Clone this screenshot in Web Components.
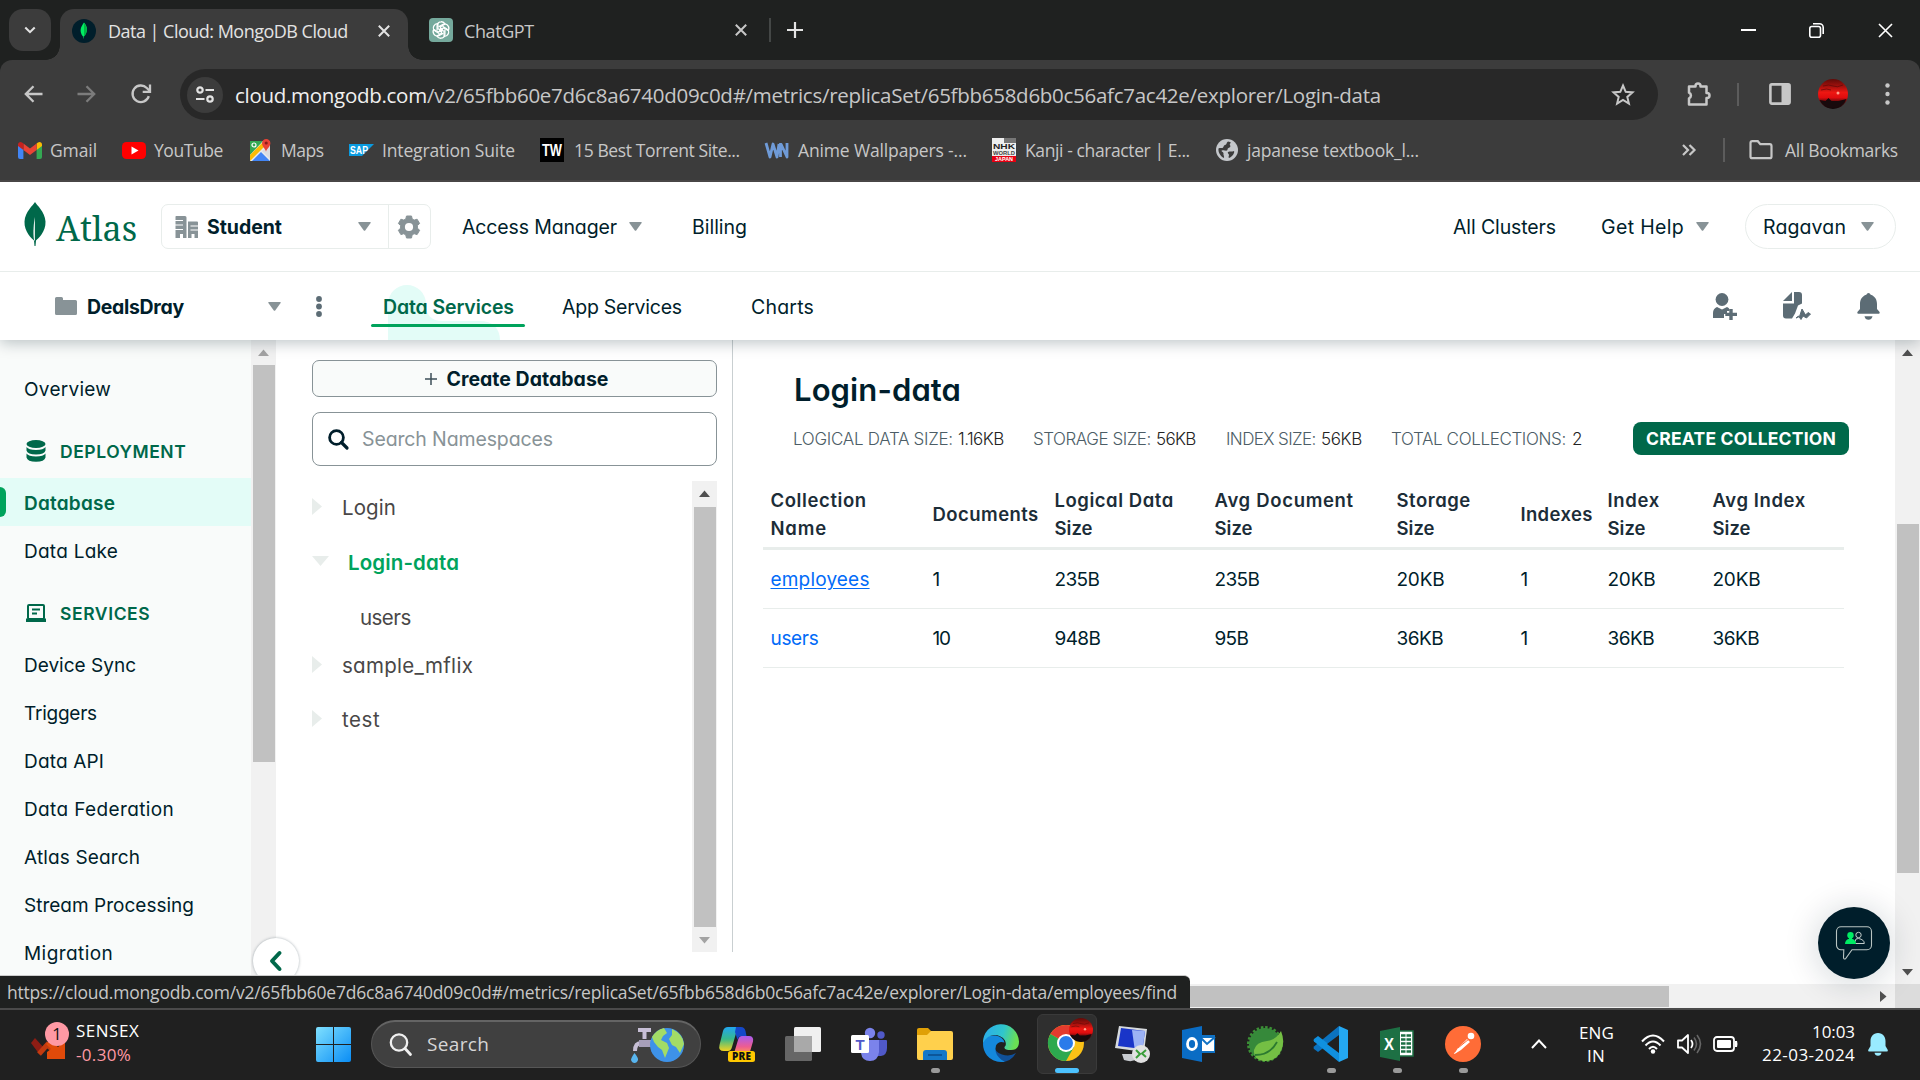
<!DOCTYPE html>
<html lang="en">
<head>
<meta charset="utf-8">
<title>Data | Cloud: MongoDB Cloud</title>
<style>
html,body{margin:0;padding:0;width:1920px;height:1080px;overflow:hidden;background:#fff}
</style>
</head>
<body>
<desktop-screen></desktop-screen>
<script>
const UI = `"Open Sans","Noto Sans",sans-serif`;
const EU = `Inter,"Liberation Sans",sans-serif`;
const BASE = `<style>*{box-sizing:border-box}:host{display:block;box-sizing:border-box}.row{display:flex;align-items:center;width:100%}.row>*{flex:none}svg{display:block;overflow:visible}</style>`;

/* Label that spreads its letters so that the run takes exactly the width asked for. */
class FitText extends HTMLElement {
  connectedCallback() {
    const root = this.attachShadow({mode: 'open'});
    root.innerHTML = `<style>:host{display:block;white-space:pre;flex:none;line-height:1.36}span{display:inline-block;text-decoration:inherit;padding-top:var(--drop,0px)}</style><span><slot></slot></span>`;
    const w = +this.getAttribute('w');
    const span = root.querySelector('span');
    const n = this.textContent.length;
    if (w && n > 1) {
      const natural = span.getBoundingClientRect().width;
      span.style.letterSpacing = ((w - natural) / (n - 0.5)).toFixed(3) + 'px';
      this.style.width = w + 'px';
    }
  }
}
customElements.define('fit-text', FitText);

const t = (w, s, style = '') => `<fit-text w="${w}" style="${style}">${s}</fit-text>`;
const svg = (w, h, vb, inner, extra = '') => `<svg width="${w}" height="${h}" viewBox="${vb}" fill="none" ${extra}>${inner}</svg>`;
/* Lays items out left to right; each one is [left edge, width, markup]. */
function line(items, style = '') {
  let end = 0;
  return `<div class="row" style="${style}">` + items.map(([x, w, html, st = '']) => {
    const m = x - end; end = x + w;
    return `<div style="margin-left:${m}px;width:${w}px;${st}">${html}</div>`;
  }).join('') + `</div>`;
}
const define = (name, css, html) => customElements.define(name, class extends HTMLElement {
  connectedCallback() {
    const r = this.attachShadow({mode: 'open'});
    r.innerHTML = BASE + `<style>${css}</style>` + (typeof html === 'function' ? html(this) : html);
  }
});
const caret = (c = '#889397', w = 13, h = 9) => svg(w, h, '0 0 13 9', `<path d="M.8 0h11.4q.9.2.4 1L7.2 8.4q-.7.9-1.4 0L.4 1Q-.1.2.8 0z" fill="${c}"/>`);
const cross = (c, s = 12, sw = 2) => svg(s, s, '0 0 12 12', `<path d="M.8.8l10.4 10.4M11.2.8L.8 11.2" stroke="${c}" stroke-width="${sw}"/>`);
const redSky = (id, s) => svg(s, s, '0 0 30 30', `<defs><linearGradient id="${id}" x1="0" y1="0" x2="0" y2="1"><stop offset="0" stop-color="#5e0b08"/><stop offset=".25" stop-color="#a5110d"/><stop offset=".45" stop-color="#ee1712"/><stop offset=".62" stop-color="#e00c0e"/><stop offset=".78" stop-color="#4c0a0b"/><stop offset="1" stop-color="#0c0708"/></linearGradient></defs><circle cx="15" cy="15" r="15" fill="url(#${id})"/><path d="M5 7q6-2 10 0t10-1M3 11q6-2 10 0" stroke="#5c0907" stroke-width="1" opacity=".7"/><path d="M1.500 21l6 1 3-3 3 3 7 0 8-2a15 15 0 0 1-27 1z" fill="#180a0c"/><circle cx="20" cy="14" r="1.500" fill="#ffa08c"/>`);

define('tab-strip', `
:host{height:60px;background:#1f2120;font:18px ${UI};color:#e3e3e3;--drop:2px}
.strip{display:flex;height:60px;align-items:flex-start}
.search{margin:9px 9px 0 9px;width:42px;height:42px;border-radius:14px;background:#3c3c3c;display:grid;place-items:center}
.tab{margin-top:9px;height:51px;width:348px;background:#3c3c3c;border-radius:14px 14px 0 0;position:relative;display:flex}
.tab:before,.tab:after{content:"";position:absolute;bottom:0;width:14px;height:14px}
.tab:before{left:-14px;background:radial-gradient(circle at 0 0,transparent 13.5px,#3c3c3c 14px)}
.tab:after{right:-14px;background:radial-gradient(circle at 100% 0,transparent 13.5px,#3c3c3c 14px)}
.rest{width:1512px}
`, `<div class="strip"><div class="search">${svg(12, 8, '0 0 14 9', '<path d="M1.500 1.500L7 7l5.500-5.500" stroke="#e3e3e3" stroke-width="2.400"/>')}</div>
<div class="tab">${line([
  [12, 24, svg(24, 24, '0 0 24 24', '<circle cx="12" cy="12" r="12" fill="#001e2b"/><path d="M12 3.500c3.500 4 4.600 9-.4 14l-.1 2h-.4l-.1-2C7 12.500 8.600 8 12 3.500z" fill="#00ed64"/><path d="M12 4v13.500c4-4 3.600-9.500 0-13.500z" fill="#00b545"/>')],
  [48, 240, t(240, 'Data | Cloud: MongoDB Cloud')], [318, 12, cross('#e3e3e3')]], 'height:43px')}</div>
<div class="rest">${line([
  [21, 24, svg(24, 24, '0 0 24 24', '<rect width="24" height="24" rx="4" fill="#75a99c"/><g stroke="#fff" stroke-width="1.300"><path id="p" d="M12 3.800a4 4 0 0 1 4 2.300l-4.400 2.600v5.200M12 3.800a4 4 0 0 0-3.900 4v4.700"/><use href="#p" transform="rotate(60 12 12)"/><use href="#p" transform="rotate(120 12 12)"/><use href="#p" transform="rotate(180 12 12)"/><use href="#p" transform="rotate(240 12 12)"/><use href="#p" transform="rotate(300 12 12)"/></g>')],
  [56, 70, t(70, 'ChatGPT', 'color:#c7c7c7')], [327, 12, cross('#c7c7c7')],
  [361, 2, '', 'height:24px;background:#444746'],
  [379, 16, svg(16, 16, '0 0 16 16', '<path d="M8 0v16M0 8h16" stroke="#e3e3e3" stroke-width="2.200"/>')],
  [1333, 15, svg(15, 2, '0 0 15 2', '<path d="M0 1h15" stroke="#fff" stroke-width="2"/>')],
  [1401, 15, svg(15, 15, '0 0 15 15', '<rect x=".8" y="3.500" width="10.700" height="10.700" rx="2" stroke="#fff" stroke-width="1.600"/><path d="M4 .8h6.500a3.700 3.700 0 0 1 3.700 3.700V11" stroke="#fff" stroke-width="1.600"/>')],
  [1470, 15, cross('#fff', 15, 1.3)]], 'height:60px')}</div></div>`);

define('address-row', `
:host{height:68px;background:#3c3c3c;font:20.500px ${UI};color:#c7c7c7;border-radius:12px 12px 0 0;--drop:2px}
.omni{width:100%;height:51px;border-radius:26px;background:#282828;display:flex;align-items:center;margin-top:1px}
.chip{width:36px;height:36px;border-radius:50%;background:#3c3c3c;display:grid;place-items:center}
`, line([
  [24, 19, svg(19, 18, '0 0 19 18', '<path d="M18.500 9H2M9.500 1.200L1.800 9l7.700 7.800" stroke="#c7c7c7" stroke-width="2.300"/>')],
  [77, 19, svg(19, 18, '0 0 19 18', '<path d="M.5 9H17M9.500 1.200L17.200 9l-7.700 7.800" stroke="#7c7c7c" stroke-width="2.300"/>')],
  [131, 20, svg(20, 20, '0 0 20 20', '<path d="M17.800 12.200A8.300 8.300 0 1 1 15.800 4L19 7.300" stroke="#c7c7c7" stroke-width="2.300"/><path d="M19 .5v7.300h-7.300" stroke="#c7c7c7" stroke-width="2.300"/>')],
  [180, 1478, `<div class="omni"><div class="chip" style="margin-left:7px">${svg(18, 17, '0 0 18 17', '<g stroke="#e3e3e3" stroke-width="2.200"><circle cx="4" cy="4" r="2.700"/><path d="M9.500 4H18M0 13h8.500"/><circle cx="14" cy="13" r="2.700"/></g>')}</div>
    <div style="display:flex;margin-left:12px">${t(192, 'cloud.mongodb.com', 'color:#f0f0f0')}${t(954, '/v2/65fbb60e7d6c8a6740d09c0d#/metrics/replicaSet/65fbb658d6b0c56afc7ac42e/explorer/Login-data')}</div>
    <div style="margin-left:230px">${svg(24, 23, '0 0 24 23', '<path d="M12 2.500l2.700 6.300 6.800.6-5.200 4.500 1.600 6.700L12 17l-5.900 3.600 1.600-6.700-5.200-4.500 6.800-.6z" stroke="#c7c7c7" stroke-width="2"/>')}</div></div>`],
  [1687, 25, svg(25, 25, '0 0 25 25', '<path d="M2 4.500h6.500V4a2.500 2.500 0 0 1 5 0v.5h6V11h.5a2.500 2.500 0 0 1 0 5h-.5v6.500H2v-6.200a3 3 0 0 0 0-5.600z" stroke="#c7c7c7" stroke-width="2.500" stroke-linejoin="round"/>')],
  [1737, 2, '', 'height:23px;background:#5c5c5c'],
  [1769, 22, svg(22, 22, '0 0 22 22', '<rect x="1.400" y="1.400" width="19.200" height="19.200" rx="1.500" stroke="#c7c7c7" stroke-width="2.600"/><path d="M12.500 1h8v20h-8z" fill="#c7c7c7"/>')],
  [1818, 30, redSky('sky', 30)],
  [1885, 5, svg(5, 22, '0 0 5 22', '<circle cx="2.500" cy="2.500" r="2.200" fill="#c7c7c7"/><circle cx="2.500" cy="11" r="2.200" fill="#c7c7c7"/><circle cx="2.500" cy="19.500" r="2.200" fill="#c7c7c7"/>')]
], 'height:68px'));

define('bookmark-bar', `:host{height:54px;background:#3c3c3c;font:17.500px ${UI};color:#c7c7c7;border-bottom:2px solid #484646;--drop:1px}`, line([
  [18, 24, svg(24, 17, '0 0 24 17', '<path d="M0 2v13q0 2 2 2h3.400V7z" fill="#4285f4"/><path d="M18.600 17H22q2 0 2-2V2l-5.400 5z" fill="#34a853"/><path d="M18.600 1.500V8L24 4V2.500C24 0 21.500-.7 20 .4z" fill="#fbbc04"/><path d="M5.400 8V1.500L12 6.500l6.600-5V8L12 13z" fill="#ea4335"/><path d="M0 2.500V4l5.400 4V1.500L4 .4C2.500-.7 0 0 0 2.500z" fill="#c5221f"/>')],
  [50, 47, t(47, 'Gmail')],
  [122, 24, svg(24, 17, '0 0 24 17', '<rect width="24" height="17" rx="4.500" fill="#f00"/><path d="M9.500 4.500v8l7-4z" fill="#fff"/>')],
  [154, 69, t(69, 'YouTube')],
  [249, 23, svg(23, 23, '0 0 23 23', '<path d="M1 3h20v20H1z" fill="#e8eaed"/><path d="M1 3h13L1 17z" fill="#34a853"/><path d="M1 17L15 3l3 3L1 23z" fill="#fbbc04"/><path d="M3 23l9-9 9 9z" fill="#4285f4"/><path d="M13 13l8-6v14z" fill="#dadce0"/><path d="M17 14c0-3-4-5-4-8.800a4.200 4.200 0 0 1 8.400 0C21.400 9 17 11 17 14z" fill="#ea4335"/><circle cx="17.200" cy="5" r="1.600" fill="#8c1d18"/><circle cx="5" cy="7" r="2" stroke="#fff" stroke-width="1.200"/>', 'style="margin-top:-2px"')],
  [281, 43, t(43, 'Maps')],
  [349, 25, svg(25, 12, '0 0 25 12', '<path d="M0 0h25L13 12H0z" fill="#0a9be0"/><text x="1" y="10" font-family="Liberation Sans" font-size="10.500" font-weight="700" fill="#fff" textLength="18" lengthAdjust="spacingAndGlyphs">SAP</text>')],
  [382, 133, t(133, 'Integration Suite')],
  [540, 24, svg(24, 24, '0 0 24 24', '<path d="M0 0h24v24H0z" fill="#000"/><text x="2" y="18" font-family="Liberation Sans" font-size="16" font-weight="700" fill="#fff" textLength="20" lengthAdjust="spacingAndGlyphs">TW</text>')],
  [574, 166, t(166, '15 Best Torrent Site...')],
  [765, 24, svg(24, 17, '0 0 24 17', '<path d="M1 1l4 14 3-13 4 13 2-13M15.500 1v14M16 2l6 13V1" stroke="#6f9bd8" stroke-width="2.800" stroke-linejoin="round"/>')],
  [798, 169, t(169, 'Anime Wallpapers -...')],
  [992, 24, svg(24, 24, '0 0 24 24', '<path d="M0 0h24v24H0z" fill="#eee"/><path d="M12 0h12v5H12z" fill="#777"/><path d="M0 18h24v6H0z" fill="#e60012"/><g font-family="Liberation Sans" font-weight="700"><text x="1" y="11" font-size="8" fill="#222" textLength="22" lengthAdjust="spacingAndGlyphs">NHK</text><text x="1" y="17" font-size="5.500" fill="#444" textLength="22" lengthAdjust="spacingAndGlyphs">WORLD</text><text x="3" y="23" font-size="5.500" fill="#fff" textLength="18" lengthAdjust="spacingAndGlyphs">JAPAN</text></g>')],
  [1025, 165, t(165, 'Kanji - character | E...')],
  [1216, 22, svg(22, 22, '0 0 22 22', '<circle cx="11" cy="11" r="11" fill="#c4c7cb"/><path d="M12 2.500c-2 1.500-1 3-3 3.500S8 9 6 9s-3 0-3.500.5C2 13 4 17 8 19c.5-2-1-3-.5-4.500S4 12 6 11.500s4 .5 5 0 0-2 1.500-2.500S15 7.500 14 6s2-2 0-3zM12 13c2-1 4 0 6-1 1 2-2 6-5 7-1-1 0-2 0-3s-2-2-1-3z" fill="#3c3c3c"/>')],
  [1247, 172, t(172, 'japanese textbook_l...')],
  [1682, 14, svg(14, 12, '0 0 14 12', '<path d="M1 1l5 5-5 5M7.500 1l5 5-5 5" stroke="#c7c7c7" stroke-width="2.200"/>')],
  [1723, 2, '', 'height:24px;background:#5c5c5c'],
  [1749, 24, svg(24, 20, '0 0 24 20', '<path d="M1.500 3q0-1.800 1.800-1.800h5.500l2.500 3h9.400q1.800 0 1.800 1.800v10.400q0 1.800-1.800 1.800H3.300q-1.800 0-1.800-1.800z" stroke="#c7c7c7" stroke-width="2.200"/>')],
  [1785, 113, t(113, 'All Bookmarks')]
], 'height:44px'));

define('atlas-nav', `
:host{height:90px;background:#fff;border-bottom:1px solid #e8edeb;font:19.500px ${EU};font-feature-settings:"cv11";color:#001e2b;--drop:2px}
.box{display:flex;height:45px;border:1px solid #e8edeb;border-radius:7px}
.box .org{width:227px;border-right:1px solid #e8edeb;display:flex}
.pill{height:45px;border:1px solid #e8edeb;border-radius:23px;display:flex}
`, line([
  [24, 22, svg(22, 44, '0 0 22 44', '<path d="M11 0c1.500 3 10 9.500 10.500 19.500C22 30 14 36.500 12 38.500L11.500 44h-1L10 38.500C8 36.500 0 30 .5 19.500 1 9.500 9.500 3 11 0z" fill="#00684a"/><path d="M11 15v24l-1-1C8.500 30 10 20 11 15z" fill="#fff" opacity=".85"/>', 'style="margin-top:-5px"')],
  [56, 81, t(81, 'Atlas', "font:34px 'Noto Serif','Liberation Serif',serif;color:#00684a;line-height:1.1;margin-top:3px")],
  [161, 270, `<div class="box"><div class="org">${line([
     [13, 23, svg(23, 22, '0 0 23 22', '<path d="M1 0h9q1.500 0 1.500 1.500V22H8v-4H5v4H.5V1Q.5 0 1 0zM13 5.500h9q1 0 1 1V22h-3.500v-4h-3v4H13z" fill="#889397"/><path d="M0 4.500h8M0 9h8M0 13.500h8M15.500 10h7.500M15.500 14h7.500" stroke="#fff" stroke-width="1.200"/>')],
     [45, 75, t(75, 'Student', 'font-weight:700')], [196, 13, caret()]])}</div>
     <div style="display:grid;place-items:center;width:39px">${svg(22, 22, '0 0 22 22', '<path d="M8.500 0h5l.7 3 2 1.100 2.900-.9 2.500 4.300-2.200 2.100v2.500l2.200 2.200-2.500 4.300-3-.9-2 1.200-.6 3.100h-5l-.7-3-2-1.300-2.900.9L.4 14.300l2.200-2.200V9.600L.4 7.500l2.500-4.300 2.900.9 2-1.200z" fill="#889397" stroke="#889397" stroke-linejoin="round"/><circle cx="11" cy="11" r="4.100" fill="#fff"/>')}</div></div>`],
  [462, 155, t(155, 'Access Manager')], [629, 13, caret()], [692, 55, t(55, 'Billing')],
  [1453, 103, t(103, 'All Clusters')], [1601, 83, t(83, 'Get Help')], [1696, 12, caret()],
  [1745, 151, `<div class="pill">${line([[17, 83, t(83, 'Ragavan')], [115, 13, caret()]])}</div>`]
], 'height:89px'));

define('project-nav', `
:host{height:68px;background:#fff;font:19.500px ${EU};font-feature-settings:"cv11";color:#001e2b;position:relative;z-index:3;box-shadow:0 3px 14px rgba(0,30,43,.26);clip-path:inset(0 0 -30px 0);--drop:2px}
.on{height:68px;position:relative;display:flex;align-items:center}
.on svg{position:absolute;left:17px;top:12px}
.on fit-text{position:relative;margin-left:12px}
.on i{position:absolute;left:0;right:0;top:52px;height:3px;border-radius:2px;background:#00a35c}
`, line([
  [55, 22, svg(22, 18, '0 0 22 18', '<path d="M0 1.500Q0 0 1.500 0h5Q8 0 8 1.500V3h12.500Q22 3 22 4.500v12q0 1.500-1.500 1.500h-19Q0 18 0 16.500z" fill="#889397"/>')],
  [87, 97, t(97, 'DealsDray', 'font-weight:700')], [268, 12, caret()],
  [316, 6, svg(6, 21, '0 0 6 21', '<g fill="#5c6c75"><circle cx="3" cy="3" r="2.900"/><circle cx="3" cy="10.500" r="2.900"/><circle cx="3" cy="18" r="2.900"/></g>')],
  [371, 154, `<div class="on">${svg(112, 56, '0 0 112 56', '<path d="M0 56V20a19 19 0 0 1 38 0c0 11 5 17 17 17h37c12 0 20 7 20 19z" fill="#e3fcf7"/>')}${t(131, 'Data Services', 'font-weight:600;color:#00684a')}<i></i></div>`],
  [562, 120, t(120, 'App Services')], [751, 63, t(63, 'Charts')],
  [1713, 24, svg(24, 27, '0 0 24 27', '<g fill="#5c6c75"><circle cx="9" cy="6.500" r="6.400"/><path d="M4 14l5 2.500L14 14q2 .8 2.500 2.200V18H14v3h-3v4H0v-5c0-3 1.500-5 4-6z"/><path d="M16.300 16h3.400v3.800H24V23h-4.300v4h-3.400v-4h-4v-3.200h4z"/></g>')],
  [1783, 29, svg(29, 28, '0 0 29 28', '<g fill="#5c6c75"><path d="M0 9L9 0v9z"/><path d="M11 0h5q3 0 3 3v8.500l-4 2-3 8-3 5H3q-3 0-3-3V11.500h11z"/><path d="M13 26l3.500-1.500 2.500-7.500 3.500 6 2.500-2.500 2.500 1.500-4 4-3.500-2-2 3.500-2.500-3.500z" stroke="#5c6c75" stroke-linejoin="round"/></g>')],
  [1857, 23, svg(23, 27, '0 0 23 27', '<g fill="#5c6c75"><path d="M11.500 0q1.500 0 2.200 1.800C18 3 20 7 20 11v5l2.600 3q.6 1.800-.8 1.800H1.200Q-.2 20.800.4 19L3 16v-5c0-4 2-8 6.300-9.200Q10 0 11.500 0z"/><path d="M7.500 23.200h8q-.8 3.500-4 3.500t-4-3.500z"/></g>')]
], 'height:68px;overflow:hidden'));

/* Scrollbar with a track, two arrows and a thumb; sizes come from attributes. */
define('scroll-bar', `
:host{width:25px;background:#f1f1f1;display:flex;flex-direction:column;align-items:center}
.th{background:#c1c1c1;width:22px}.a{height:24px;display:grid;place-items:center}
`, el => {
  const up = el.getAttribute('up') || '#505050', dn = el.getAttribute('down') || '#505050';
  return `<div class="a">${svg(11, 7, '0 0 11 7', `<path d="M0 7L5.500.5 11 7z" fill="${up}"/>`)}</div>
  <div class="th" style="margin-top:${el.getAttribute('offset')}px;height:${el.getAttribute('thumb')}px"></div><div style="flex:1"></div>
  <div class="a">${svg(11, 7, '0 0 11 7', `<path d="M0 0l5.500 6.500L11 0z" fill="${dn}"/>`)}</div>`;
});

define('side-item', `
:host{height:48px;display:flex;align-items:center;padding-left:24px;position:relative}
:host([active]){background:#e3fcf7;color:#00684a;font-weight:600}
:host([active]):before{content:"";position:absolute;left:0;top:9px;width:6px;height:30px;border-radius:0 6px 6px 0;background:#00a35c}
`, el => t(el.getAttribute('w'), el.getAttribute('label')));
define('side-heading', `
:host{display:flex;align-items:center;font-size:17.500px;font-weight:600;color:#00684a;--drop:1px}
slot{display:block}fit-text{margin-left:auto}
`, el => `<slot></slot>${t(el.getAttribute('w'), el.getAttribute('label'))}`);

define('side-nav', `
:host{width:276px;height:644px;display:flex;background:#f9fbfa;font:19px ${EU};font-feature-settings:"cv11";color:#001e2b;overflow:hidden;--drop:3px}
nav{width:251px;padding-top:24px}
`, `<nav><side-item w="87" label="Overview"></side-item>
<side-heading w="126" label="DEPLOYMENT" style="margin:26px 0 14px 26px;height:26px;width:160px">${svg(20, 22, '0 0 20 22', '<g fill="#00684a"><ellipse cx="10" cy="4" rx="9.500" ry="4"/><path d="M.5 7q2 3 9.500 3t9.500-3v3.500q-1 4-9.500 4t-9.500-4z"/><path d="M.5 13.500q2 3 9.500 3t9.500-3v4q-1 4.200-9.500 4.200T.5 17.500z"/></g>')}</side-heading>
<side-item active w="91" label="Database"></side-item><side-item w="94" label="Data Lake"></side-item>
<side-heading w="90" label="SERVICES" style="margin:26px 0 14px 26px;height:26px;width:124px">${svg(20, 18, '0 0 20 18', '<rect x="2" y="1" width="16" height="14" rx="1" stroke="#00684a" stroke-width="2"/><path d="M0 14.500h20V18H0z" fill="#00684a"/><path d="M6 5.500h8M6 9.500h5" stroke="#00684a" stroke-width="1.800"/>')}</side-heading>
${[['Device Sync', 112], ['Triggers', 73], ['Data API', 80], ['Data Federation', 150], ['Atlas Search', 116], ['Stream Processing', 170], ['Migration', 89]].map(([s, w]) => `<side-item w="${w}" label="${s}"></side-item>`).join('')}
</nav><scroll-bar up="#a3a3a3" offset="1" thumb="397"></scroll-bar>`);

define('tree-item', `:host{display:flex;align-items:center}`, el => {
  const open = el.hasAttribute('open'), leaf = el.hasAttribute('leaf');
  const arrow = leaf ? '' : open ? svg(17, 10, '0 0 17 10', '<path d="M0 0h17L8.500 10z" fill="#e8edeb"/>') : svg(10, 17, '0 0 10 17', '<path d="M0 0v17l10-8.500z" fill="#e8edeb"/>');
  return `<div style="width:${leaf ? 48 : open ? 36 : 30}px">${arrow}</div>${t(el.getAttribute('w'), el.getAttribute('label'))}`;
});

define('namespace-panel', `
:host{width:457px;height:612px;border-right:1px solid #c9cfd1;padding:20px 15px 0 36px;font:20.500px ${EU};font-feature-settings:"cv11";color:#494747}
.btn{width:405px;height:37px;border:1px solid #889397;border-radius:7px;background:#f9fbfa;display:flex;align-items:center;justify-content:center;color:#001e2b;font-weight:700;font-size:19.500px;gap:10px;padding-left:4px;--drop:1px}
.find{margin-top:15px;width:405px;height:54px;border:1px solid #889397;border-radius:8px;display:flex;align-items:center;color:#889397;font-size:19.500px;padding-left:15px;--drop:1px}
.tree{display:flex;margin-top:15px;justify-content:space-between;height:471px;--drop:3px}
.list{width:360px}
`, `<div class="btn">${svg(12, 12, '0 0 12 12', '<path d="M6 0v12M0 6h12" stroke="#3d4f58" stroke-width="1.500"/>')}${t(162, 'Create Database')}</div>
<div class="find">${svg(21, 21, '0 0 21 21', '<circle cx="8.500" cy="8.500" r="6.900" stroke="#001e2b" stroke-width="2.800"/><path d="M13.500 13.500l5.500 5.500" stroke="#001e2b" stroke-width="3.200" stroke-linecap="round"/>')}<div style="width:13px"></div>${t(191, 'Search Namespaces')}</div>
<div class="tree"><div class="list">
<tree-item w="54" label="Login" style="height:50px"></tree-item>
<tree-item open w="111" label="Login-data" style="height:60px;color:#00a35c;font-weight:600"></tree-item>
<tree-item leaf w="51" label="users" style="height:50px"></tree-item>
<tree-item w="131" label="sample_mflix" style="height:46px"></tree-item>
<tree-item w="38" label="test" style="height:62px"></tree-item>
</div><scroll-bar down="#a3a3a3" offset="2" thumb="420" style="height:471px"></scroll-bar></div>`);

define('collection-table', `
:host{width:1081px;font:19px ${EU};font-feature-settings:"cv11";color:#001e2b;--drop:2px}
.g{display:grid;grid-template-columns:162px 122px 160px 182px 124px 87px 105px 139px;align-items:center;border-bottom:1px solid #e8edeb;height:59px}
.g>div{padding-left:7.500px}.head{height:70px;border-bottom:3px solid #e8edeb;font-weight:600;font-size:18.500px;color:#1c2d38;--drop:0px}
.head fit-text{line-height:28px}.link{color:#016bf8}
`, () => {
  const head = [[['Collection', 96], ['Name', 56]], [['Documents', 106]], [['Logical Data', 119], ['Size', 38]], [['Avg Document', 139], ['Size', 38]], [['Storage', 74], ['Size', 38]], [['Indexes', 72]], [['Index', 52], ['Size', 38]], [['Avg Index', 93], ['Size', 38]]];
  const rows = [[['employees', 99], ['1', 0], ['235B', 45], ['235B', 45], ['20KB', 48], ['1', 0], ['20KB', 48], ['20KB', 48]], [['users', 48], ['10', 18], ['948B', 46], ['95B', 34], ['36KB', 47], ['1', 0], ['36KB', 47], ['36KB', 47]]];
  const under = 'text-decoration:underline;text-underline-offset:2px';
  return `<div class="g head">${head.map(c => `<div>${c.map(([s, w]) => t(w, s)).join('')}</div>`).join('')}</div>` +
    rows.map((r, i) => `<div class="g">${r.map(([s, w], j) => `<div class="${j ? '' : 'link'}">${t(w, s, !i && !j ? under : '')}</div>`).join('')}</div>`).join('');
});

define('database-view', `
:host{width:1162px;font:300 17px ${EU};font-feature-settings:"cv11";color:#4c5d66;--drop:2px}
.title{margin:29px 0 0 61px;height:44px;font-size:31px;font-weight:600;color:#001e2b;--drop:0px}
.cta{height:33px;border-radius:8px;background:#00684a;display:flex;align-items:center;justify-content:center;color:#fff;font-weight:700;font-size:17.500px;--drop:0px}
`, `<div class="title">${t(167, 'Login-data')}</div>${line([
  [60, 160, t(160, 'LOGICAL DATA SIZE:')], [225, 46, t(46, '1.16KB', 'color:#222')],
  [300, 118, t(118, 'STORAGE SIZE:')], [423, 40, t(40, '56KB', 'color:#222')],
  [493, 90, t(90, 'INDEX SIZE:')], [588, 41, t(41, '56KB', 'color:#222')],
  [658, 175, t(175, 'TOTAL COLLECTIONS:')], [839, 10, t(0, '2', 'color:#222')],
  [900, 216, `<div class="cta">${t(190, 'CREATE COLLECTION')}</div>`]], 'margin-top:9px;height:33px')}
  <collection-table style="margin:25px 0 0 30px"></collection-table>`);

define('atlas-page', `
:host{height:668px;position:relative;background:#fff;overflow:hidden}
.body{display:flex;height:644px}
.bottom{display:flex;height:24px;background:#f1f1f1}
.collapse{position:absolute;left:253px;top:598px;width:46px;height:46px;border-radius:50%;background:#fff;box-shadow:0 0 3px rgba(0,30,43,.35);display:grid;place-items:center}
.chat{position:absolute;left:1818px;top:567px;width:72px;height:72px;border-radius:50%;background:#001e2b;box-shadow:0 3px 30px 6px rgba(0,30,43,.13);display:grid;place-items:center}
.status{position:absolute;left:0;bottom:0;width:1190px;height:33px;background:#1f2120;border-top:1px solid #ccc;border-radius:0 6px 0 0;font:17.500px ${UI};color:#c7c7c7;padding:5px 0 0 7px}
`, `<div class="body"><side-nav></side-nav><namespace-panel></namespace-panel><database-view></database-view>
<scroll-bar offset="160" thumb="349" style="height:644px"></scroll-bar></div>
<div class="bottom"><div style="width:1669px;height:21px;margin-top:2px;background:#c1c1c1"></div><div style="width:226px;padding:7px 0 0 211px">${svg(7, 11, '0 0 7 11', '<path d="M0 0v11l6.500-5.500z" fill="#505050"/>')}</div><div style="width:25px;background:#dcdcdc"></div></div>
<div class="collapse">${svg(14, 20, '0 0 14 20', '<path d="M10.500 2L3 10l7.500 8" stroke="#00684a" stroke-width="4" stroke-linecap="round" stroke-linejoin="round"/>')}</div>
<div class="chat">${svg(36, 34, '0 0 36 34', '<path d="M5 .7h26a4.500 4.500 0 0 1 4.500 4.500v14a4.500 4.500 0 0 1-4.500 4.500H16l-6.500 9q-2 .8-2-1.200l.3-7.800H5A4.500 4.500 0 0 1 .5 19V5.200A4.500 4.500 0 0 1 5 .7z" stroke="#b8c4c2" stroke-width="1.100"/><circle cx="22.500" cy="9" r="2.700" stroke="#c1ccca"/><path d="M20 13q-1 3-2 4.500h10.300q0-4-5.800-5z" stroke="#c1ccca"/><circle cx="14.500" cy="9.200" r="3.200" fill="#00ed64"/><path d="M9 18q0-4 4-5.200V11h3v1.800q4 1.200 4 5.200z" fill="#00ed64"/>')}</div>
<div class="status">${t(1170, 'https://cloud.mongodb.com/v2/65fbb60e7d6c8a6740d09c0d#/metrics/replicaSet/65fbb658d6b0c56afc7ac42e/explorer/Login-data/employees/find')}</div>`);

define('app-icon', `
:host{width:60px;height:60px;display:grid;place-items:center;position:relative;border-radius:6px}
:host([current]){background:#2f2f2f;border:1px solid #3a3a3a}
:host([running]):after,:host([current]):after{content:"";position:absolute;bottom:1px;left:26px;width:9px;height:5px;border-radius:3px;background:#9a9a9a}
:host([current]):after{left:17px;width:24px;background:#4cc2ff;bottom:0}
`, `<slot></slot>`);

const apps = [
  ['', svg(36, 36, '0 0 36 36', '<defs><linearGradient id="c1" x1="0" y1="0" x2="0" y2="1"><stop stop-color="#22a6f0"/><stop offset=".5" stop-color="#37b98a"/><stop offset="1" stop-color="#f4d31f"/></linearGradient><linearGradient id="c2" x1="0" y1="0" x2="0" y2="1"><stop stop-color="#a95cf0"/><stop offset=".6" stop-color="#ee5d90"/><stop offset="1" stop-color="#ffa04c"/></linearGradient></defs><path d="M9 1h13q-3 0-4 3l-5 17q-1 4-4 4H5q-6 0-4.500-6L4 5q1.200-4 5-4z" fill="url(#c1)"/><path d="M17 1h5q3.500 0 4.500 4l1 5h-5q-3 0-4 4L16 6z" fill="#1548c8"/><path d="M23 10h7q5 0 4 5.500l-2.500 8.500q-1 4-4 4H11q4 0 5-4l3-10q1-4 4-4z" fill="url(#c2)"/><rect x="9" y="25" width="27" height="11" rx="2.500" fill="#ffc800"/><text x="13" y="34" font-family="Open Sans" font-weight="800" font-size="10" fill="#111" textLength="19">PRE</text>')],
  ['', svg(36, 36, '0 0 36 36', '<rect x="9" y="1" width="27" height="25" rx="1.500" fill="#f0f0f0"/><rect x="0" y="10" width="27" height="25" rx="1.500" fill="#666"/><path d="M9 10h18v16H9z" fill="#a9a9a9"/>')],
  ['', svg(36, 36, '0 0 36 36', '<circle cx="19" cy="7" r="5.200" fill="#7b83eb"/><circle cx="30" cy="9" r="3.700" fill="#5059c9"/><path d="M25 14h10q1 0 1 1v7q0 7-6 8h-5z" fill="#5059c9"/><path d="M11 14h17v12q-1 9-9 9t-9-8z" fill="#7b83eb"/><rect x="0" y="9" width="18" height="18" rx="1.500" fill="#fff"/><text x="4.500" y="23.500" font-family="Liberation Sans" font-size="15" font-weight="700" fill="#5059c9">T</text>')],
  ['running', svg(36, 34, '0 0 36 34', '<path d="M0 2.500Q0 1 2 1h9l4 4-4 6H0z" fill="#e0a006"/><path d="M0 8h10l4-4h20q2 0 2 2v25q0 2-2 2H2q-2 0-2-2z" fill="#ffd04c"/><path d="M6 33V26q0-3 3-3h18q3 0 3 3v7z" fill="#1478c8"/><path d="M11 28h14" stroke="#0b4f8f" stroke-width="1.600"/>')],
  ['', svg(36, 36, '0 0 36 36', '<defs><linearGradient id="e1" x1="0" y1="0" x2="1" y2="0.200"><stop stop-color="#2aa9ee"/><stop offset=".6" stop-color="#30c6cc"/><stop offset="1" stop-color="#6ae054"/></linearGradient></defs><path d="M11 18q0 8 8 10.500T33 27q-5 9-15 9Q6 35 6 24z" fill="#10509a"/><path d="M0 18C0 12 5 9 12 9.500q8 1 9.500 7-6-2-8.500 3-2 7 3 12 3 3.500 6 4.200Q10 37 4 29.500 0 24 0 18z" fill="#1488dc"/><path d="M0 17A18 18 0 0 1 36 15.500Q36 24 28 24q-7 0-6.500-3 2.500-2 .5-6.500Q18.500 9 11 9 4 9.500 0 17z" fill="url(#e1)"/>')],
  ['current', svg(44, 46, '0 0 44 46', `<g transform="translate(3 4)"><circle cx="18" cy="18" r="18" fill="#fbc116"/><path d="M18 18L2.400 9A18 18 0 0 1 33.600 9z" fill="#e33b2e"/><path d="M18 18L2.400 9A18 18 0 0 0 18 36l8-14z" fill="#2da94f"/><circle cx="18" cy="18" r="9" fill="#fff"/><circle cx="18" cy="18" r="7" fill="#2a7bea"/></g><g transform="translate(24 -3)">${redSky('sky2', 24)}</g>`)],
  ['', svg(36, 38, '0 0 36 38', '<path d="M7 29h14l3 4q-6 5-15 2z" fill="#c8cbd0"/><path d="M4 1l28 3-3 23L0 23z" fill="#d6dade"/><path d="M6 3l24 3-2.500 18L3 21z" fill="#1a35c8"/><path d="M17 5l13 1-2.500 18-8-1z" fill="#9cb2f5"/><circle cx="26" cy="29" r="9" fill="#e2e2e2"/><path d="M21 25l4 4-4 4M31 25l-4 3.500 4 3.500" stroke="#3a9e3a" stroke-width="2"/>')],
  ['', svg(34, 36, '0 0 34 36', '<path d="M16 9h17v18H16z" fill="#1172c4"/><path d="M19 12h13v13H19z" fill="#fff"/><path d="M19 12l6 6 8-7" stroke="#1172c4" stroke-width="2"/><path d="M0 4l20-4v36L0 32z" fill="#0a6cc4"/><ellipse cx="10" cy="18" rx="4.500" ry="5.500" stroke="#fff" stroke-width="2.800"/>')],
  ['', svg(36, 36, '0 0 36 36', '<circle cx="18" cy="18" r="16.500" stroke="#3c8f35" stroke-width="3" stroke-dasharray="2.500 1.800"/><circle cx="18" cy="18" r="16" fill="#36893a"/><path d="M34 5q5 12-1 22-6 9-17 8Q6 33 7 24q2-8 13-9 9-1 14-10z" fill="#74bf44"/><path d="M8 29q15 0 22-13" stroke="#2c7a30" stroke-width="1.800"/>')],
  ['running', svg(36, 36, '0 0 36 36', '<path d="M26 0l9 4v28l-9 4z" fill="#24a8f2"/><path d="M26 0v10L5 26l-4-3q-1-1 0-2.500z" fill="#0b73c0"/><path d="M26 36V26L5 10l-4 3q-1 1 0 2.500z" fill="#1090df"/><path d="M26 9v18L14 18z" fill="#202020"/>')],
  ['running', svg(34, 34, '0 0 34 34', '<path d="M17 4h16v25H17z" fill="#fff" stroke="#1d7044" stroke-width="1.500"/><path d="M21 8.500h10M21 12.500h10M21 16.500h10M21 20.500h10M21 24.500h10" stroke="#1d7044" stroke-width="2.300"/><path d="M26 6v21" stroke="#fff"/><path d="M0 4l20-4v34L0 30z" fill="#1d7044"/><text x="4" y="23" font-family="Liberation Sans" font-weight="700" font-size="17" fill="#fff" textLength="10" lengthAdjust="spacingAndGlyphs">X</text>')],
  ['running', svg(36, 36, '0 0 36 36', '<circle cx="18" cy="18" r="18" fill="#ff6c37"/><path d="M8 28q3-2 5-6l9-9 3 3-9 8q-4 3-8 4z" fill="#fff"/><circle cx="26" cy="10" r="3.300" fill="#fff"/><path d="M13 22l11-9" stroke="#ff6c37"/>')]
];

define('task-bar', `
:host{height:72px;background:#202020;border-top:2px solid #4a4a4a;font:17px ${UI};color:#fff}
.search{height:48px;border-radius:24px;background:#404040;border:1px solid #565656;border-top:2px solid #646464;font-size:19px;color:#d6d6d6;--drop:1px}
`, line([
  [30, 36, svg(36, 38, '0 0 36 38', '<path d="M1 20l4-5 9 10-4 7z" fill="#8e1d14"/><path d="M9 31l8-9 5 4" stroke="#c23b10" stroke-width="5"/><path d="M17 36V29l4-3-5-5 4-4 8 7 7-7v19z" fill="#e04a0a"/><circle cx="27" cy="11" r="12" fill="#ff99a4"/><text x="27" y="17" font-family="Open Sans" font-size="16.500" text-anchor="middle" fill="#111">1</text>', 'style="margin-top:-4px"')],
  [76, 64, t(63, 'SENSEX') + t(55, '-0.30%', 'color:#ff99a4'), 'margin-top:-3px'],
  [316, 35, svg(35, 35, '0 0 35 35', '<defs><linearGradient id="w" x1="0" y1="0" x2="1" y2="1"><stop stop-color="#7fe0ff"/><stop offset="1" stop-color="#0a8df5"/></linearGradient></defs><path d="M2 0h15v17H0V2q0-2 2-2zM18 0h15q2 0 2 2v15H18zM0 18h17v17H2q-2 0-2-2zM18 18h17v15q0 2-2 2H18z" fill="url(#w)"/>')],
  [371, 330, `<div class="search">${line([
    [17, 23, svg(23, 23, '0 0 23 23', '<circle cx="10" cy="9.500" r="8.200" fill="#5b5b5b" stroke="#f0f0f0" stroke-width="2.300"/><path d="M16 15.500l5.500 6" stroke="#f0f0f0" stroke-width="2.800" stroke-linecap="round"/>')],
    [55, 62, t(62, 'Search')],
    [258, 55, svg(55, 36, '0 0 55 36', '<path d="M8 3h13M14.500 2v10M20 16H11q-6 0-6 8" stroke="#c7bfd6" stroke-width="4"/><path d="M9 13h12v7H9z" fill="#a79fba"/><path d="M4.500 26q4 5 3.500 7-1 3-3.500 3T1 33q0-2 3.500-7z" fill="#58b5ef"/><circle cx="37" cy="18" r="17" fill="#3e92e8"/><path d="M22 10q4-7 12-9l3 5-4 3-2 4 6 3 2 5-4 10-3-8-4-3-4-5zM42 2q11 5 12 15l-4 9-4-6-4-2-3-6 3-4z" fill="#a3dc66"/>')]], 'height:45px')}</div>`],
  ...apps.map(([a, s], i) => [707 + i * 66, 60, `<app-icon ${a}>${s}</app-icon>`]),
  [1531, 16, svg(16, 10, '0 0 16 10', '<path d="M1 9l7-7.500L15 9" stroke="#fff" stroke-width="2"/>')],
  [1579, 36, t(35, 'ENG') + `<div style="margin-left:8px">${t(18, 'IN')}</div>`],
  [1641, 24, svg(24, 20, '0 0 24 20', '<g stroke="#fff" stroke-width="2"><path d="M1 7.500q11-12 22 0M4.500 11.500q7.500-8 15 0M8 15q4-4.500 8 0"/></g><circle cx="12" cy="17.500" r="2.200" fill="#fff"/>')],
  [1677, 24, svg(24, 20, '0 0 24 20', '<path d="M1 6.500h4L11 1v18l-6-5.500H1z" stroke="#fff" stroke-width="1.800" stroke-linejoin="round"/><path d="M14 6q3 4 0 8" stroke="#fff" stroke-width="1.800"/><path d="M17 3.500q5 6.500 0 13M20 1q7 9 0 18" stroke="#666" stroke-width="1.600"/>')],
  [1713, 25, svg(25, 16, '0 0 25 16', '<rect x="1" y="1" width="20" height="14" rx="3" stroke="#fff" stroke-width="1.800"/><rect x="4" y="4" width="14" height="8" rx="1" fill="#fff"/><path d="M22 5h2q1 3 0 6h-2z" fill="#fff"/>')],
  [1762, 94, `<div style="margin-left:50px">${t(43, '10:03')}</div>` + t(93, '22-03-2024'), 'margin-top:-2px'],
  [1868, 20, svg(20, 23, '0 0 20 23', '<path d="M10 0c5 0 7.500 4 7.500 8v5l2.300 4q.4 1.500-1 1.500H1.200q-1.400 0-1-1.500l2.300-4V8c0-4 2.500-8 7.500-8zM6.500 19.700h7q-.5 3-3.500 3t-3.500-3z" fill="#99ebff"/>')]
], 'height:68px'));

define('browser-head', `:host{background:#1f2120;height:182px}`, `<tab-strip></tab-strip><address-row></address-row><bookmark-bar></bookmark-bar>`);
define('desktop-screen', `:host{width:1920px;height:1080px;display:flex;flex-direction:column;overflow:hidden}:host>*{flex:none}`,
  `<browser-head></browser-head><atlas-nav></atlas-nav><project-nav></project-nav><atlas-page></atlas-page><task-bar></task-bar>`);
</script>
</body>
</html>
